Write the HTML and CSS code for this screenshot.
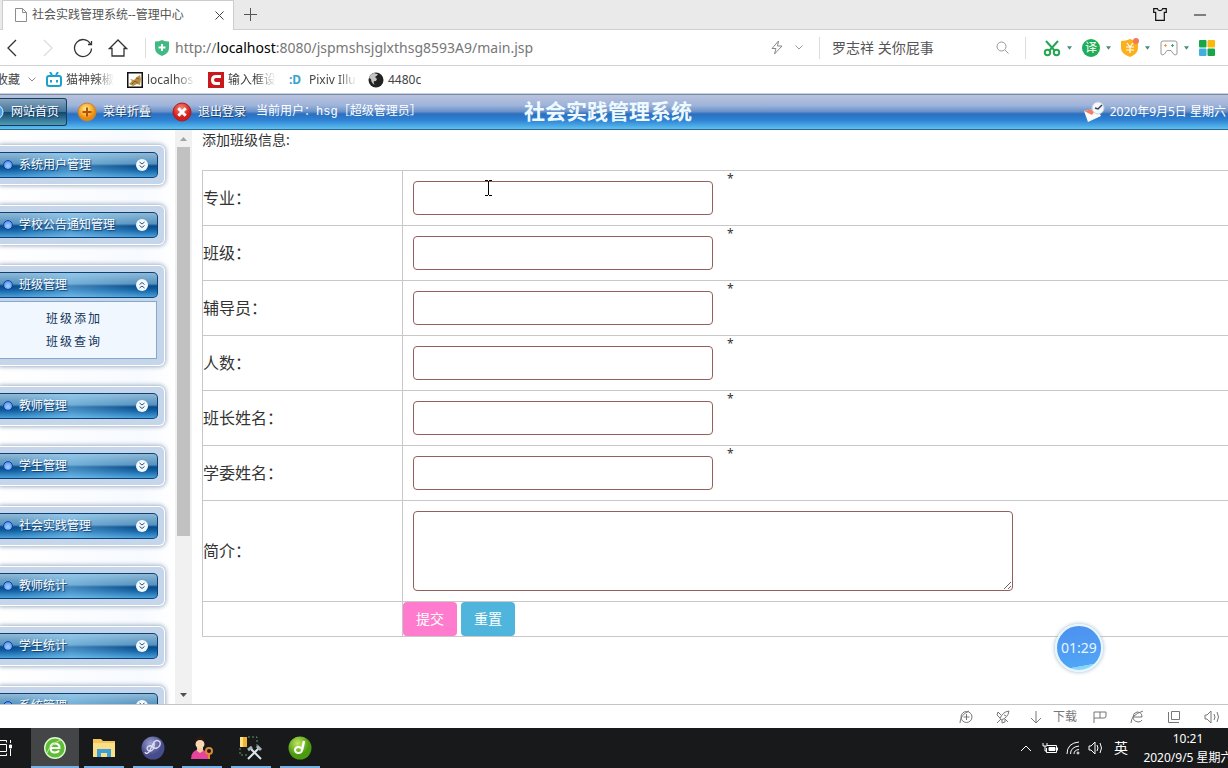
FILE: index.html
```html
<!DOCTYPE html>
<html lang="zh-CN">
<head>
<meta charset="utf-8">
<title>社会实践管理系统--管理中心</title>
<link rel="stylesheet" href="styles.css">
</head>
<body>
<svg class="defs" width="0" height="0" aria-hidden="true">
  <defs>
    <radialGradient id="gOrange" cx=".45" cy=".35"><stop offset="0" stop-color="#fff0a8"/><stop offset=".6" stop-color="#f9b637"/><stop offset="1" stop-color="#e88a12"/></radialGradient>
    <radialGradient id="gRed" cx=".45" cy=".3"><stop offset="0" stop-color="#f58a78"/><stop offset="1" stop-color="#d21f1b"/></radialGradient>
    <radialGradient id="gGreen" cx=".4" cy=".3"><stop offset="0" stop-color="#c4e860"/><stop offset="1" stop-color="#4a9a10"/></radialGradient>
    <radialGradient id="gViolet" cx=".4" cy=".3"><stop offset="0" stop-color="#9c9fd0"/><stop offset="1" stop-color="#474c8c"/></radialGradient>
    <radialGradient id="gBall" cx=".5" cy=".6"><stop offset="0" stop-color="#a6d4ff"/><stop offset="1" stop-color="#5c9cf5"/></radialGradient>
    <symbol id="down" viewBox="0 0 12 12"><circle cx="6" cy="6" r="6" fill="#f2f9ff"/><path d="M3.500 3l2.500 2 2.500-2M3.500 6.500l2.500 2 2.500-2" fill="none" stroke="#36506e"/></symbol>
    <symbol id="up" viewBox="0 0 12 12"><circle cx="6" cy="6" r="6" fill="#f2f9ff"/><path d="M3.500 5.500l2.500-2 2.500 2M3.500 9l2.500-2 2.500 2" fill="none" stroke="#36506e"/></symbol>
    <symbol id="ball" viewBox="0 0 10 10"><circle cx="5" cy="5" r="4.400" fill="url(#gBall)" stroke="#123f9e"/></symbol>
    <symbol id="caret" viewBox="0 0 6 4"><path d="M0 0h6L3 4z" fill="#4a8a7c"/></symbol>
  </defs>
</svg>

<header class="tabs">
  <div class="tab">
    <svg width="12" height="14" viewBox="0 0 12 14" fill="none" stroke="#8c8c8c"><path d="M.5.5h7l4 4v9H.500zM7.500.500v4h4"/></svg>
    <span class="tab-title">社会实践管理系统--管理中心</span>
    <button class="icon" aria-label="关闭标签"><svg width="9" height="9" viewBox="0 0 9 9" stroke="#444"><path d="M.5.5l8 8M8.500.500l-8 8"/></svg></button>
  </div>
  <button class="icon new-tab" aria-label="新标签"><svg width="13" height="13" viewBox="0 0 13 13" stroke="#555"><path d="M6.500 0v13M0 6.500h13"/></svg></button>
  <div class="window-tools">
    <button class="icon" aria-label="皮肤"><svg width="14" height="13" viewBox="0 0 14 13" fill="none" stroke="#111" stroke-width="1.200"><path d="M.7.7h3.600q.5 2 2.700 2t2.700-2h3.600v3.600h-2v8H2.700v-8h-2z"/></svg></button>
    <button class="icon" aria-label="最小化"><svg width="12" height="2"><path d="M0 1h12" stroke="#111"/></svg></button>
  </div>
</header>

<nav class="toolbar" aria-label="浏览器">
  <div class="nav-buttons">
    <button class="icon" aria-label="后退"><svg width="20" height="20" viewBox="0 0 20 20" fill="none" stroke="#333" stroke-width="1.300"><path d="M13 2L5 10l8 8"/></svg></button>
    <button class="icon" aria-label="前进"><svg width="20" height="20" viewBox="0 0 20 20" fill="none" stroke="#ddd" stroke-width="1.300"><path d="M6 2l8 8-8 8"/></svg></button>
    <button class="icon" aria-label="刷新"><svg width="20" height="20" viewBox="0 0 20 20" fill="none" stroke="#333" stroke-width="1.300"><path d="M17.500 6a8.500 8.500 0 1 0 1 4.500M18.500 3v3.500H15"/></svg></button>
    <button class="icon" aria-label="主页"><svg width="20" height="20" viewBox="0 0 20 20" fill="none" stroke="#333" stroke-width="1.300"><path d="M1.500 10.500L10 2l8.500 8.500H16V18H4v-7.500z"/></svg></button>
  </div>
  <div class="address">
    <svg width="14" height="16" viewBox="0 0 14 16"><path d="M0 1.500Q4 1.500 7 0q3 1.500 7 1.500V8q0 5.500-7 8Q0 13.500 0 8z" fill="#3fba83"/><path d="M7 4v7M3.500 7.500h7" stroke="#fff" stroke-width="2"/></svg>
    <span class="url">http://<b>localhost</b>:8080/jspmshsjglxthsg8593A9/main.jsp</span>
    <svg class="bolt" width="12" height="15" viewBox="0 0 12 15" fill="none" stroke="#888"><path d="M7.500 1L1 8.500h4L3.500 14 11 6H6.500z"/></svg>
    <svg width="8" height="5" viewBox="0 0 8 5" fill="none" stroke="#999"><path d="M.5.5L4 4 7.500.500"/></svg>
  </div>
  <div class="search">
    <span>罗志祥 关你屁事</span>
    <svg width="13" height="13" viewBox="0 0 13 13" fill="none" stroke="#999"><circle cx="5.500" cy="5.500" r="4.500"/><path d="M9 9l3.500 3.500"/></svg>
  </div>
  <div class="extras">
    <button class="icon extra" aria-label="截图"><svg width="18" height="18" viewBox="0 0 18 18" fill="none" stroke="#25a653" stroke-width="2"><path d="M3 2l9 10M15 2L6 12"/><circle cx="4.500" cy="13.500" r="2.700"/><circle cx="13.500" cy="13.500" r="2.700"/></svg><svg width="5" height="4"><use href="#caret"/></svg></button>
    <button class="icon extra" aria-label="翻译"><span class="translate">译</span><svg width="5" height="4"><use href="#caret"/></svg></button>
    <button class="icon extra" aria-label="钱包"><svg width="18" height="20" viewBox="0 0 18 20"><path d="M0 3q5 0 9-2 4 2 8 2v7q0 6-8 9-9-3-9-9z" fill="#fbb01c"/><path d="M6 5l3 4 3-4M5 9h8M5 12h8M9 9v6" stroke="#fff" stroke-width="1.200" fill="none"/><circle cx="15" cy="3" r="3" fill="#f07a5c"/></svg><svg width="5" height="4"><use href="#caret"/></svg></button>
    <button class="icon extra" aria-label="游戏"><svg width="18" height="16" viewBox="0 0 18 16" fill="none" stroke="#999"><path d="M3 1h12q2 0 2 2v11q-2 2-3.500 0L11 10.500H7L4.500 14Q3 16 1 14V3q0-2 2-2z"/><path d="M4 5.500h3M5.500 4v3" stroke="#e8a33c"/><path d="M11 5.500h3M12.500 4v3" stroke="#37a866"/></svg><svg width="5" height="4"><use href="#caret"/></svg></button>
    <button class="icon" aria-label="应用"><svg width="16" height="16" viewBox="0 0 16 16"><rect width="7.500" height="7.500" rx="1" fill="#18a64a"/><rect x="8.500" width="7.500" height="7.500" rx="1" fill="#f9b90f"/><rect y="8.500" width="7.500" height="7.500" rx="1" fill="#42aee0"/><rect x="8.500" y="8.500" width="7.500" height="7.500" rx="1" fill="#18a64a"/></svg></button>
  </div>
</nav>

<nav class="bookmarks" aria-label="收藏">
  <button class="icon favorites">收藏 <svg width="8" height="5" viewBox="0 0 8 5" fill="none" stroke="#888"><path d="M.5.5L4 4 7.500.500"/></svg></button>
  <a class="bookmark" href="#"><svg width="16" height="16" viewBox="0 0 16 16" fill="none" stroke="#1d9fd0" stroke-width="2"><path d="M4 0l2 3M12 0l-2 3"/><rect x="1" y="4" width="14" height="10" rx="2"/><path d="M5 8v2.500M11 8v2.500"/></svg><span class="faded">猫神辣椒</span></a>
  <a class="bookmark" href="#"><svg width="16" height="16" viewBox="0 0 16 16"><path d="M.75.750h14.500v14.500H.750z" fill="#fff" stroke="#111" stroke-width="1.500"/><path d="M2 12l3-3-2-2 4 1 3-3 3-2 1 4-1 6-3-1-4 2z" fill="#b98e3e"/><path d="M5 12l3-3 3 2M9 6l3 1" stroke="#7a5f2c" fill="none"/></svg><span class="faded">localhos</span></a>
  <a class="bookmark" href="#"><svg width="16" height="16" viewBox="0 0 16 16"><path d="M0 0h16v16H0z" fill="#c81a1c"/><path d="M13 4.500H8Q4.500 4.500 4.500 8T8 11.500h4" fill="none" stroke="#fff" stroke-width="3"/></svg><span class="faded">输入框设</span></a>
  <a class="bookmark" href="#"><i class="pixiv">:D</i><span class="faded">Pixiv Illu</span></a>
  <a class="bookmark" href="#"><svg width="16" height="16" viewBox="0 0 16 16"><circle cx="8" cy="8" r="7.500" fill="#222"/><path d="M1 6q1-4 5-5 2 1 4 1-1 2-3 3l2 2q-1 3-3 2-1 3 2 4-5-1-5-6z" fill="#c4c4c4"/></svg><span>4480c</span></a>
</nav>

<div class="app-header">
  <div class="app-actions">
    <button class="home"><svg width="8" height="16" viewBox="0 0 8 16"><circle cx="-4" cy="8" r="7" fill="#4f9fe4" stroke="#d8f0ff"/></svg>网站首页</button>
    <button class="action"><svg width="20" height="20" viewBox="0 0 20 20"><circle cx="10" cy="10" r="9" fill="url(#gOrange)" stroke="#c88231"/><path d="M10 5.500v9M5.500 10h9" stroke="#b84f0c" stroke-width="2"/></svg>菜单折叠</button>
    <button class="action"><svg width="20" height="20" viewBox="0 0 20 20"><circle cx="10" cy="10" r="9" fill="url(#gRed)" stroke="#b31819"/><path d="M6.300 6.300l7.400 7.400M13.700 6.300l-7.400 7.400" stroke="#fff" stroke-width="3"/></svg>退出登录</button>
    <span class="user">当前用户：hsg［超级管理员］</span>
  </div>
  <h1 class="app-title">社会实践管理系统</h1>
  <div class="date"><svg width="24" height="22" viewBox="0 0 24 22"><path d="M2 10l13-3 4 8-13 6z" fill="#fbfbfb"/><path d="M2 10l8 4 5-7z" fill="#ef8160"/><circle cx="16" cy="7" r="6" fill="#f4f7fb" stroke="#c8d0dc"/><path d="M13 7l3 1 4-4" stroke="#345" stroke-width="1.500" fill="none"/></svg>2020年9月5日 星期六</div>
</div>

<div class="workspace">
  <aside class="sidebar">
    <section class="group"><button class="group-bar"><svg width="10" height="10"><use href="#ball"/></svg><span>系统用户管理</span><svg width="12" height="12"><use href="#down"/></svg></button></section>
    <section class="group"><button class="group-bar"><svg width="10" height="10"><use href="#ball"/></svg><span>学校公告通知管理</span><svg width="12" height="12"><use href="#down"/></svg></button></section>
    <section class="group"><button class="group-bar"><svg width="10" height="10"><use href="#ball"/></svg><span>班级管理</span><svg width="12" height="12"><use href="#up"/></svg></button>
      <div class="submenu"><a href="#">班级添加</a><a href="#">班级查询</a></div>
    </section>
    <section class="group"><button class="group-bar"><svg width="10" height="10"><use href="#ball"/></svg><span>教师管理</span><svg width="12" height="12"><use href="#down"/></svg></button></section>
    <section class="group"><button class="group-bar"><svg width="10" height="10"><use href="#ball"/></svg><span>学生管理</span><svg width="12" height="12"><use href="#down"/></svg></button></section>
    <section class="group"><button class="group-bar"><svg width="10" height="10"><use href="#ball"/></svg><span>社会实践管理</span><svg width="12" height="12"><use href="#down"/></svg></button></section>
    <section class="group"><button class="group-bar"><svg width="10" height="10"><use href="#ball"/></svg><span>教师统计</span><svg width="12" height="12"><use href="#down"/></svg></button></section>
    <section class="group"><button class="group-bar"><svg width="10" height="10"><use href="#ball"/></svg><span>学生统计</span><svg width="12" height="12"><use href="#down"/></svg></button></section>
    <section class="group"><button class="group-bar"><svg width="10" height="10"><use href="#ball"/></svg><span>系统管理</span><svg width="12" height="12"><use href="#down"/></svg></button></section>
  </aside>
  <div class="scrollbar" aria-hidden="true">
    <svg width="17" height="17" viewBox="0 0 17 17"><path d="M5 11h7L8.500 7z" fill="#a3a3a3"/></svg>
    <div class="track"><div class="thumb"></div></div>
    <svg width="17" height="17" viewBox="0 0 17 17"><path d="M5 6h7l-3.500 4z" fill="#505050"/></svg>
  </div>
  <main class="content">
    <h2 class="form-title">添加班级信息:</h2>
    <form>
      <table class="form-table">
        <tr><th><label for="major">专业：</label></th><td><div class="field"><input id="major" type="text"><span>*</span></div></td></tr>
        <tr><th><label for="class">班级：</label></th><td><div class="field"><input id="class" type="text"><span>*</span></div></td></tr>
        <tr><th><label for="tutor">辅导员：</label></th><td><div class="field"><input id="tutor" type="text"><span>*</span></div></td></tr>
        <tr><th><label for="count">人数：</label></th><td><div class="field"><input id="count" type="text"><span>*</span></div></td></tr>
        <tr><th><label for="monitor">班长姓名：</label></th><td><div class="field"><input id="monitor" type="text"><span>*</span></div></td></tr>
        <tr><th><label for="study">学委姓名：</label></th><td><div class="field"><input id="study" type="text"><span>*</span></div></td></tr>
        <tr><th><label for="intro">简介：</label></th><td><div class="field"><textarea id="intro"></textarea></div></td></tr>
        <tr><th></th><td><div class="buttons"><button class="btn submit" type="button">提交</button><button class="btn reset" type="reset">重置</button></div></td></tr>
      </table>
    </form>
  </main>
</div>

<footer class="status">
  <svg width="14" height="14" viewBox="0 0 14 14"><circle cx="7.500" cy="7" r="5.500"/><path d="M7.500 4v6M4.500 7h6M1 13Q1 5 10 1"/></svg>
  <svg width="14" height="14" viewBox="0 0 14 14"><path d="M4 9Q6 2 13 1q-1 7-8 9zM5 5L2 2 1 5l3 3M9 9v3l-3 1v-3M1 13l3-3M9 9l3 3M8 5l2 1"/></svg>
  <div class="download"><svg width="12" height="14" viewBox="0 0 12 14"><path d="M6 1v12M1 8l5 5 5-5"/></svg><span>下载</span></div>
  <svg width="14" height="14" viewBox="0 0 14 14"><path d="M1 13V2h12v4q0 2-2 2H7V2M1 8h6"/></svg>
  <svg width="14" height="14" viewBox="0 0 14 14"><path d="M3 7h9q0-5-5-5-4 1-4 5t5 5q3 0 4-2M1 13Q1 5 13 1"/></svg>
  <svg width="14" height="14" viewBox="0 0 14 14"><path d="M4.500 1.500h8v8h-8zM1.500 2v10.500H12"/></svg>
  <svg width="16" height="14" viewBox="0 0 16 14"><path d="M1 5v4h2l4 4V1L3 5zM10 4q2 3 0 6M13 2q3 5 0 10"/></svg>
</footer>

<div class="taskbar">
  <svg class="task-view" width="14" height="16" viewBox="0 0 14 16" fill="none" stroke="#fff"><path d="M0 4.500h6.500v7H0M0 .5h6.500v2M0 15.500h6.500v-2M10.500 0v3M10.500 9v7"/><path d="M9.500 5h2v3h-2z" fill="#fff"/></svg>
  <div class="apps">
    <button class="app active" aria-label="浏览器"><svg width="22" height="22" viewBox="0 0 22 22"><circle cx="11" cy="11" r="10.300" fill="#5fbd35" stroke="#dff5d0" stroke-width="1.400"/><path d="M6.500 11h9q0-4.500-4.500-4.500T6.500 11t4.500 4.500q3 0 4-2" fill="none" stroke="#fff" stroke-width="2"/><path d="M3 16Q6 7 17 3" fill="none" stroke="#b9e89b"/></svg></button>
    <button class="app" aria-label="文件夹"><svg width="22" height="20" viewBox="0 0 22 20"><path d="M0 1h8l2 2h12v16H0z" fill="#f3c65a"/><path d="M0 5h22v14H0z" fill="#fbdf88"/><path d="M4 19v-8h14v8h-4v-4H8v4z" fill="#3d9fd6"/></svg></button>
    <button class="app" aria-label="开发工具"><svg width="24" height="24" viewBox="0 0 24 24"><circle cx="12" cy="12" r="11.500" fill="url(#gViolet)"/><path d="M4 16q1 3 4 0L13 6q3-3 6 0 1 4-3 6-4 1-5-2-4-1-5 2 0 3 4 3 4-2 3-9" fill="none" stroke="#dfe0f5" stroke-width="1.300"/></svg></button>
    <button class="app" aria-label="用户工具"><svg width="24" height="24" viewBox="0 0 24 24"><path d="M1 23q0-9 9-10 8 1 9 10z" fill="#e7459b"/><path d="M7 10h6v5l-3 2-3-2z" fill="#f3c9a0"/><circle cx="10" cy="8" r="4.500" fill="#f9d8b3"/><path d="M5 8q-1-7 5-8 6 1 5 8-1-4-5-4T5 8z" fill="#2b1a14"/><circle cx="19" cy="15" r="3" fill="none" stroke="#df8a2c" stroke-width="2"/><path d="M19 18v5" stroke="#df8a2c" stroke-width="2"/></svg></button>
    <button class="app" aria-label="数据库工具"><svg width="24" height="24" viewBox="0 0 24 24"><path d="M1 1h7v10H1z" fill="#efb52e"/><path d="M1 1h3v10H1z" fill="#ffe08a"/><path d="M9 1h9v10M1 12v7h8" fill="none" stroke="#5c9a6b" stroke-dasharray="2 2"/><path d="M9 23L20 12M12 13l10 10" stroke="#dce4e8" stroke-width="2"/><path d="M9 14l4-3M18 10l4 4" stroke="#a7b3b9" stroke-width="3"/></svg></button>
    <button class="app" aria-label="音乐"><svg width="24" height="24" viewBox="0 0 24 24"><circle cx="12" cy="12" r="11.500" fill="url(#gGreen)"/><ellipse cx="10.500" cy="14" rx="3.500" ry="3" fill="none" stroke="#fff" stroke-width="2"/><path d="M14 14l2-9" stroke="#fff" stroke-width="2.500"/></svg></button>
  </div>
  <div class="tray">
    <svg width="12" height="8" viewBox="0 0 12 8"><path d="M1 7l5-5 5 5"/></svg>
    <svg width="16" height="12" viewBox="0 0 16 12"><path d="M5 3.500h9.500v7h-10V6M1 1v3h4V1M3 4v5h2M15.500 5.500v3"/><path d="M7 5.500h6v3H7z" fill="#fff"/></svg>
    <svg width="14" height="14" viewBox="0 0 14 14"><path d="M1 13Q1 2 13 1M4.500 13q0-7 8.500-8M8 13q0-4 5-4.500"/><circle cx="12" cy="12" r="1"/></svg>
    <svg width="16" height="14" viewBox="0 0 16 14"><path d="M1 5v4h2l4 4V1L3 5zM9 4q2 3 0 6M12 2q3 5 0 10"/></svg>
    <span class="ime">英</span>
    <div class="clock"><time>10:21</time><span>2020/9/5 星期六</span></div>
  </div>
</div>

<div class="timer">01:29</div>
<svg class="cursor" width="8" height="16" viewBox="0 0 8 16" fill="none" stroke="#000"><path d="M0 .5h3M4 .5h3M3.500 1v14M0 15.500h3M4 15.500h3"/></svg>
</body>
</html>
```
FILE: styles.css
```css
* { box-sizing: border-box; }
body {
  margin: 0;
  height: 100vh;
  display: flex;
  flex-direction: column;
  overflow: hidden;
  position: relative;
  background: #fff;
  color: #333;
  font: 12px/16px "Noto Sans", "Noto Sans CJK SC", sans-serif;
}
svg { flex: none; display: block; }
button { font: inherit; color: inherit; }
a { color: inherit; text-decoration: none; }
.defs { position: absolute; }
.icon { display: flex; align-items: center; border: 0; padding: 0; background: none; }

.tabs { flex: none; height: 30px; display: flex; align-items: center; background: #eaeaea; border-bottom: 1px solid #d0d0d0; padding-left: 2px; }
.tab { width: 232px; height: 30px; display: flex; align-items: center; gap: 5px; padding: 0 9px 0 12px; background: #fff; border: 1px solid #ccc; border-width: 1px 1px 0; }
.tab-title { flex: 1; white-space: nowrap; color: #555; }
.new-tab { margin-left: 10px; }
.window-tools { margin-left: auto; display: flex; gap: 27px; padding-right: 22px; }

.toolbar { flex: none; height: 36px; display: flex; align-items: center; border-bottom: 1px solid #d0d4d8; }
.nav-buttons { display: flex; gap: 15px; padding: 0 17px 0 3px; border-right: 1px solid #ddd; height: 20px; }
.address { flex: 1; display: flex; align-items: center; gap: 6px; padding: 0 16px 0 9px; }
.url { flex: 1; font-size: 14px; line-height: 20px; color: #777; white-space: nowrap; }
.url b { font-weight: 400; color: #000; }
.bolt { margin-right: 6px; }
.search { width: 207px; height: 22px; display: flex; align-items: center; justify-content: space-between; padding: 0 16px 0 12px; border: 1px solid #ddd; border-width: 0 1px; font-size: 14px; line-height: 20px; color: #555; }
.extras { display: flex; align-items: center; gap: 10px; padding: 0 13px 0 17px; }
.extra { gap: 6px; }
.translate { width: 18px; height: 18px; border-radius: 9px; background: #1fae57; color: #fff; line-height: 18px; text-align: center; }

.bookmarks { flex: none; height: 28px; display: flex; align-items: center; gap: 13px; border-bottom: 1px solid #c3d3e6; color: #444; }
.favorites { gap: 8px; width: 37px; margin-left: -4px; white-space: nowrap; }
.bookmark { display: flex; align-items: center; gap: 4px; }
.bookmark span { width: 48px; white-space: nowrap; }
.faded { mask-image: linear-gradient(90deg, #000 60%, transparent); }
.pixiv { width: 16px; font-style: normal; font-weight: 700; color: #35a3cf; }
.bookmark:last-child { margin-left: -2px; }

.app-header {
  flex: none;
  height: 36px;
  display: grid;
  grid-template-columns: 1fr auto 1fr;
  align-items: center;
  padding-right: 12px;
  border: 1px solid #7c88a4;
  border-width: 1px 0;
  border-bottom-color: #286b92;
  background: linear-gradient(#bac3dd, #9eb4db 30%, #6d94ca 48%, #2b6fbf 56%, #2f84d6 75%, #5fc0ee);
  color: #fff;
  white-space: nowrap;
}
.app-actions { display: flex; align-items: center; gap: 10px; }
.home, .action { display: flex; align-items: center; color: #fff; text-shadow: 1px 1px 1px #123a66; }
.home { height: 28px; width: 67px; gap: 3px; padding: 0; border: 1px solid #173f63; border-left: 0; border-radius: 0 3px 3px 0; background: linear-gradient(#87a5bd, #43749a 48%, #14486f 52%, #4f9cb4); }
.action { gap: 6px; padding: 0; border: 0; background: none; }
.action + .action { margin-left: 11px; }
.user { font-family: "Liberation Mono", "Noto Sans CJK SC", monospace; }
.app-title { margin: 0; font: 700 21px/28px "Liberation Serif", "Noto Sans CJK SC", serif; color: #eefaff; }
.date { justify-self: end; display: flex; align-items: center; gap: 4px; margin-right: -10px; }

.workspace { flex: 1; min-height: 0; display: flex; }
.sidebar { width: 175px; padding: 15px 10px 0 0; display: flex; flex-direction: column; gap: 20px; overflow: hidden; background: linear-gradient(90deg, #fff, #f7faff 80%, #fff); }
.group { flex: none; padding: 6px 6px 6px 0; border: 1px solid #fff; border-left: 0; border-radius: 0 6px 6px 0; background: #c5d6ea; box-shadow: 0 0 4px 1px #9fb0c4; }
.group-bar { width: 100%; height: 26px; display: flex; align-items: center; gap: 6px; padding: 0 9px 0 3px; border: 1px solid #0d4279; border-left: 0; border-radius: 0 5px 5px 0; background: linear-gradient(90deg, transparent 10%, #9bdcff66 45%, transparent 90%), linear-gradient(#90b9d5, #5592bf 45%, #0a4a88 54%, #1262a4 70%, #4b9fd8); color: #fff; text-shadow: 1px 1px 1px #0b3b70; }
.group-bar span { flex: 1; text-align: left; }
.submenu { margin: 3px 1px 0 0; padding: 5px 0 5px 46px; display: flex; flex-direction: column; border: 1px solid #86a8cb; border-left: 0; background: #f0f7ff; line-height: 23px; letter-spacing: 2px; color: #123458; }
.scrollbar { width: 17px; display: flex; flex-direction: column; background: #f1f1f1; }
.track { flex: 1; padding: 0 2px; }
.thumb { height: 72%; background: #c1c1c1; }

.content { flex: 1; min-width: 0; padding-left: 10px; }
.form-title { margin: 0 0 20px; font-size: 14px; line-height: 20px; font-weight: 400; }
.form-table { width: 100%; border-collapse: collapse; }
.form-table th, .form-table td { padding: 0; border: 1px solid #c8c8c8; }
.form-table td { border-right: 0; }
.form-table th { width: 200px; text-align: left; font-size: 16px; line-height: 22px; font-weight: 400; }
.field { display: flex; align-items: flex-start; gap: 4px; line-height: 16px; }
.field input, .field textarea { display: block; margin: 10px; border: 1px solid #94605c; border-radius: 4px; background: #fff; font: inherit; }
.field input { width: 300px; height: 34px; padding: 6px 12px; }
.field textarea { width: 600px; height: 80px; padding: 6px 12px; }
.buttons { display: flex; gap: 4px; }
.btn { height: 34px; padding: 0 13px; border: 0; border-radius: 4px; color: #fff; font-size: 14px; }
.submit { background: #ff7bce; }
.reset { background: #50b5dd; }

.status { flex: none; height: 24px; display: flex; align-items: center; justify-content: flex-end; gap: 23px; padding-right: 8px; border-top: 1px solid #c4c4c4; color: #777; }
.status svg { fill: none; stroke: #777; }
.download { display: flex; align-items: center; gap: 11px; margin: 0 -7px 0 -3px; }

.taskbar { flex: none; height: 40px; display: flex; align-items: center; background: #17191a; color: #fff; overflow: hidden; }
.task-view { margin-right: 17px; }
.apps { display: flex; gap: 1px; height: 40px; }
.app { width: 48px; height: 40px; padding: 0; border: 0; display: flex; align-items: center; justify-content: center; background: linear-gradient(#76b0e4, #76b0e4) bottom / 40px 2px no-repeat; }
.app.active { background: linear-gradient(#76b0e4, #76b0e4) bottom / 48px 2px no-repeat #434546; }
.tray { margin-left: auto; width: 208px; display: flex; align-items: center; gap: 8px; }
.tray svg { fill: none; stroke: #fff; }
.tray svg:first-child { margin-right: 2px; }
.ime { font-size: 14px; margin-left: 2px; }
.clock { flex: none; width: 94px; margin-left: 5px; display: flex; flex-direction: column; align-items: center; line-height: 19px; white-space: nowrap; }

.timer { position: absolute; left: 1055px; top: 624px; width: 48px; height: 48px; border: 2px solid #e6f6ff; border-radius: 24px; background: linear-gradient(170deg, #4d8ff0, #50a5f5 85%, #8bd5fb 86%); box-shadow: 0 0 4px #9bb4c8; color: #e9f6ff; font-size: 14px; line-height: 44px; text-align: center; }
.cursor { position: absolute; left: 485px; top: 180px; }
```
